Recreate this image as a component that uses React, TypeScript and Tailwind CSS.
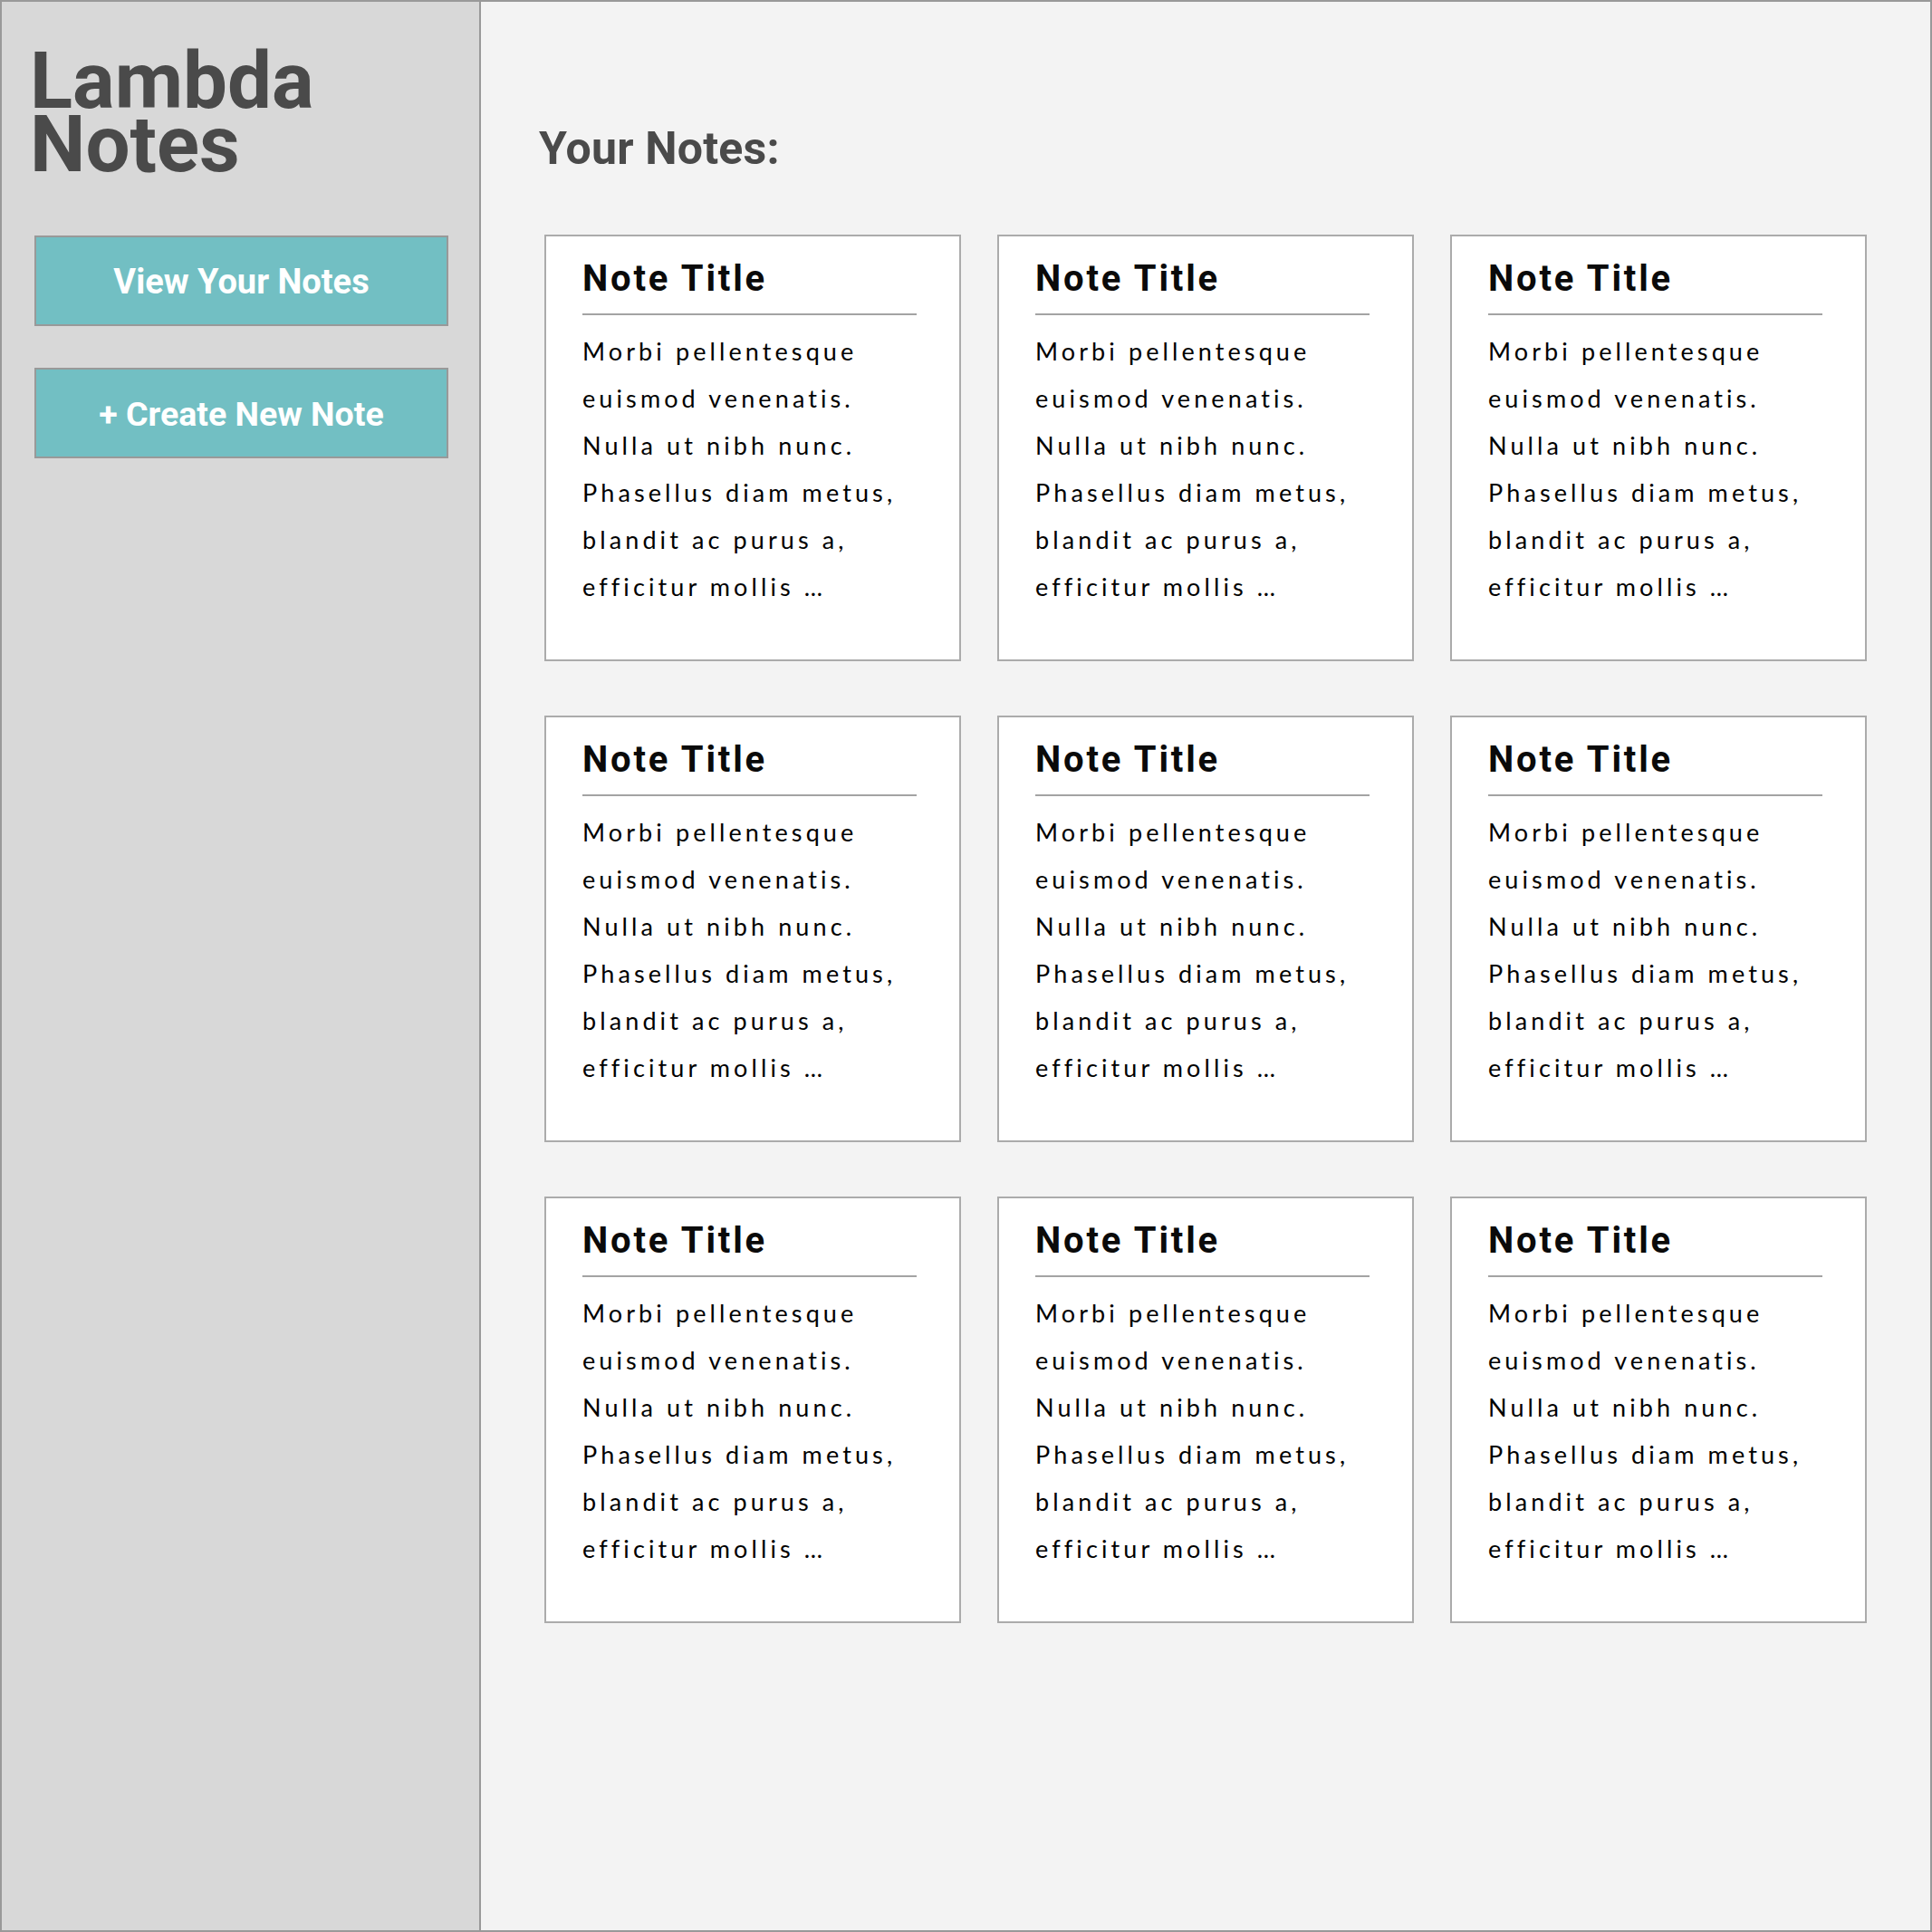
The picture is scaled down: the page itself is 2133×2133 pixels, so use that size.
import React from "react";

const lines = [
  "Morbi pellentesque",
  "euismod venenatis.",
  "Nulla ut nibh nunc.",
  "Phasellus diam metus,",
  "blandit ac purus a,",
  "efficitur mollis …",
];

function Card() {
  return (
    <div className="h-[471px] border-2 border-[#ababab] bg-white pl-[40px] pt-[27px]">
      <div className="w-[369px] border-b-2 border-[#a3a3a3] pb-[18px]">
        <div className="font-['Roboto'] text-[40px] leading-[40px] font-bold tracking-[2.8px] text-[#0a0a0a]">
          Note Title
        </div>
      </div>
      <div className="mt-[14px] font-['Lato',sans-serif] text-[27px] leading-[52px] font-normal tracking-[4.1px] text-[#000]">
        {lines.map((l) => (
          <div key={l} className="whitespace-nowrap">
            {l}
          </div>
        ))}
      </div>
    </div>
  );
}

export default function App() {
  return (
    <div className="flex h-[2133px] w-[2133px] border-2 border-[#999] font-['Roboto',sans-serif]">
      <div className="w-[529px] shrink-0 border-r-2 border-[#999] bg-[#d8d8d8]">
        <div className="pl-[31px] pt-[52px] text-[87px] leading-[70px] font-bold text-[#4a4a4a]">
          <div>Lambda</div>
          <div>Notes</div>
        </div>
        <div className="ml-[36px] mt-[66px] flex w-[457px] flex-col gap-[46px]">
          <div className="flex h-[100px] items-center justify-center border-2 border-[#999] bg-[#72bfc3] pt-[2px] text-[38px] font-bold text-white">
            View Your Notes
          </div>
          <div className="flex h-[100px] items-center justify-center border-2 border-[#999] bg-[#72bfc3] pt-[2px] text-[37.5px] font-bold text-white">
            + Create New Note
          </div>
        </div>
      </div>
      <div className="flex-1 bg-[#f3f3f3] pl-[70px] pt-[138px]">
        <div className="-ml-[6px] text-[50px] leading-[49px] font-bold tracking-[0.2px] text-[#4a4a4a]">
          Your Notes:
        </div>
        <div className="mt-[70px] grid grid-cols-[repeat(3,460px)] gap-x-[40px] gap-y-[60px]">
          {Array.from({ length: 9 }).map((_, i) => (
            <Card key={i} />
          ))}
        </div>
      </div>
    </div>
  );
}
